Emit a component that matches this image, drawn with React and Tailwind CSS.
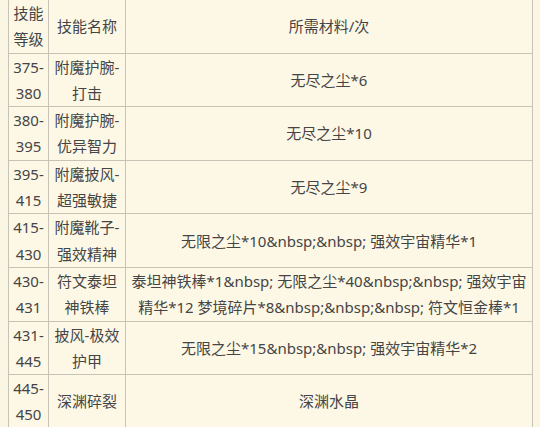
import React from 'react';

const rows = [
  { lv: ['375-', '380'], name: ['附魔护腕-', '打击'], mat: ['无尽之尘*6'] },
  { lv: ['380-', '395'], name: ['附魔护腕-', '优异智力'], mat: ['无尽之尘*10'] },
  { lv: ['395-', '415'], name: ['附魔披风-', '超强敏捷'], mat: ['无尽之尘*9'] },
  { lv: ['415-', '430'], name: ['附魔靴子-', '强效精神'], mat: ['无限之尘*10&nbsp;&nbsp; 强效宇宙精华*1'] },
  {
    lv: ['430-', '431'],
    name: ['符文泰坦', '神铁棒'],
    mat: ['泰坦神铁棒*1&nbsp; 无限之尘*40&nbsp;&nbsp; 强效宇宙', '精华*12 梦境碎片*8&nbsp;&nbsp;&nbsp; 符文恒金棒*1'],
  },
  { lv: ['431-', '445'], name: ['披风-极效', '护甲'], mat: ['无限之尘*15&nbsp;&nbsp; 强效宇宙精华*2'] },
  { lv: ['445-', '450'], name: ['深渊碎裂'], mat: ['深渊水晶'] },
];

function Lines({ items }) {
  return items.map((t, i) => (
    <React.Fragment key={i}>
      {i > 0 && <br />}
      {t}
    </React.Fragment>
  ));
}

export default function App() {
  return (
    <div
      className="w-[540px] h-[427px] overflow-hidden bg-[#fbf6e3] text-[#454545] text-[15px]"
      style={{ fontFamily: '"Noto Sans", "Noto Sans CJK SC", sans-serif' }}
    >
      <div className="ml-[8px] w-[525px] -mt-[1px]">
        <table className="w-full table-fixed border-collapse bg-[#fdf8e6] leading-[26.3px]">
          <colgroup>
            <col className="w-[40px]" />
            <col className="w-[77px]" />
            <col />
          </colgroup>
          <thead>
            <tr>
              <th className="border border-[#c7c3b6] font-normal text-center p-0">
                技能<br />等级
              </th>
              <th className="border border-[#c7c3b6] font-normal text-center p-0">技能名称</th>
              <th className="border border-[#c7c3b6] font-normal text-center p-0">所需材料/次</th>
            </tr>
          </thead>
          <tbody>
            {rows.map((r, i) => (
              <tr key={i}>
                <td className="border border-[#c7c3b6] text-center p-0 whitespace-nowrap">
                  <Lines items={r.lv} />
                </td>
                <td className="border border-[#c7c3b6] text-center p-0 whitespace-nowrap">
                  <Lines items={r.name} />
                </td>
                <td className="border border-[#c7c3b6] text-center p-0 whitespace-nowrap">
                  <Lines items={r.mat} />
                </td>
              </tr>
            ))}
          </tbody>
        </table>
        <div className="h-[4px] bg-[#a19e97]" />
      </div>
    </div>
  );
}
